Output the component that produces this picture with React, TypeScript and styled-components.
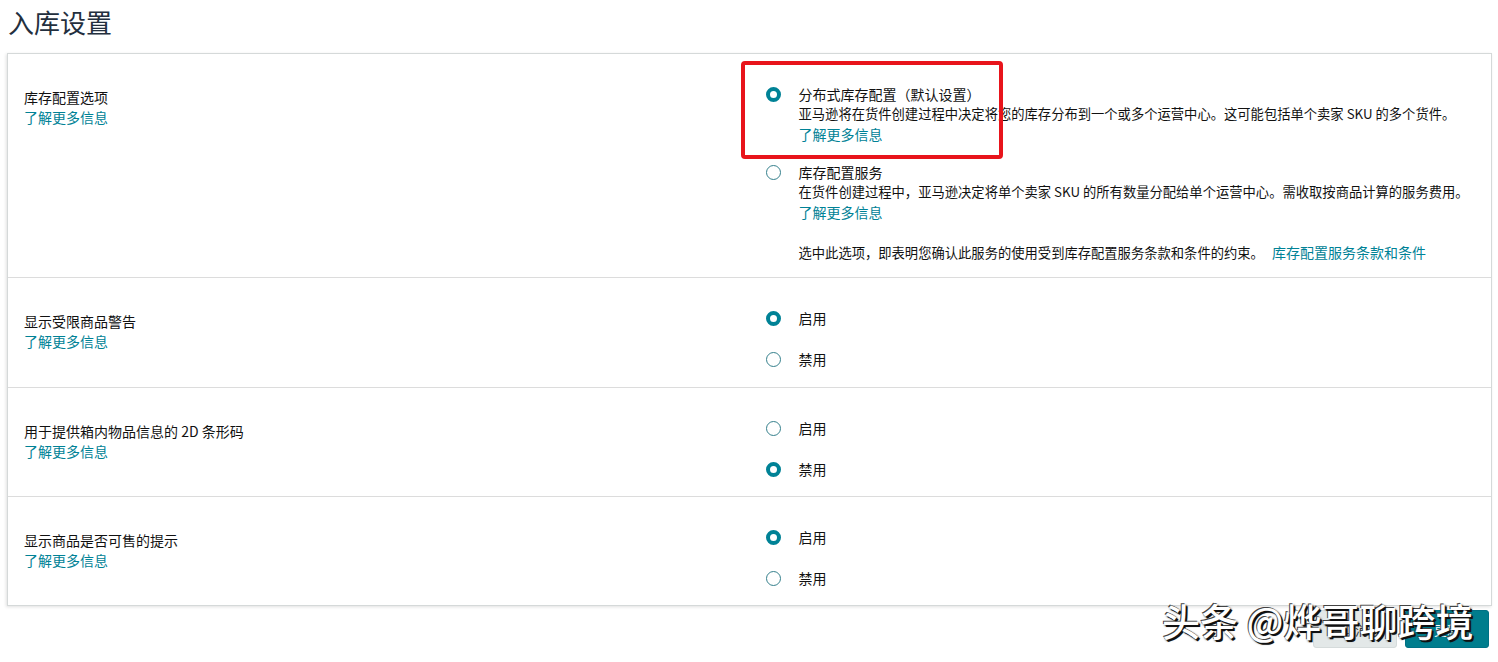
import React from 'react';
import styled, { createGlobalStyle } from 'styled-components';

const GlobalStyle = createGlobalStyle`
  body {
    margin: 0;
    background: #ffffff;
    font-family: "Noto Sans CJK SC", "Noto Sans", Arial, sans-serif;
    color: #111111;
  }
`;

const Page = styled.div`
  position: relative;
  padding: 0 6px 0 7px;
  height: 662px;
  overflow: hidden;
`;

const Heading = styled.h1`
  margin: 0;
  padding: 4px 0 0 1px;
  height: 53px;
  box-sizing: border-box;
  font-size: 26px;
  font-weight: 400;
  line-height: 36px;
  color: #232f3e;
`;

const Card = styled.div`
  border: 1px solid #d5d9d9;
  box-shadow: -1px 1px 3px rgba(0, 0, 0, 0.12);
  background: #fff;
`;

const Row = styled.div`
  display: grid;
  grid-template-columns: 1fr 1fr;
  column-gap: 32px;
  padding: 30px 16px 0 16px;
  height: ${(p) => p.$height}px;
  box-sizing: border-box;
  & + & {
    border-top: 1px solid #dcdcdc;
  }
`;

const LabelCol = styled.div`
  padding-top: 3px;
  font-size: 14px;
  line-height: 20px;
`;

const Link = styled.a`
  display: block;
  color: #008296;
  text-decoration: none;
  font-size: 14px;
  line-height: 20px;
  cursor: pointer;
`;

const InlineLink = styled(Link)`
  display: inline;
  margin-left: 8px;
`;

const Options = styled.div`
  position: relative;
  display: flex;
  flex-direction: column;
  gap: ${(p) => p.$gap}px;
`;

const Option = styled.label`
  display: flex;
  align-items: flex-start;
  gap: 18px;
  font-size: 14px;
  line-height: 20px;
`;

const Radio = styled.span`
  flex: none;
  width: 15px;
  height: 15px;
  margin-top: 3px;
  box-sizing: border-box;
  border-radius: 50%;
  border: ${(p) => (p.$checked ? '4px solid #008296' : '1px solid #35808c')};
  background: #fff;
`;

const OptionBody = styled.div`
  display: flex;
  flex-direction: column;
`;

const Title = styled.div`
  color: #111;
`;

const Desc = styled.div`
  font-size: 13.3px;
  line-height: 20px;
  color: #111;
  white-space: nowrap;
`;

const Terms = styled.div`
  margin-top: 20px;
  font-size: 13.3px;
  line-height: 20px;
  white-space: nowrap;
`;

/* red annotation frame drawn over the first option */
const Highlight = styled.div`
  position: absolute;
  left: -25px;
  top: -23px;
  width: 262px;
  height: 98px;
  box-sizing: border-box;
  border: 4px solid #e8141b;
  border-radius: 4px;
  pointer-events: none;
`;

const Footer = styled.div`
  display: flex;
  justify-content: flex-end;
  gap: 8px;
  padding: 4px 3px 0 0;
`;

const Button = styled.button`
  width: 84px;
  height: 38px;
  border-radius: 3px;
  border: 1px solid ${(p) => (p.$primary ? '#007185' : '#d5dbdb')};
  background: ${(p) => (p.$primary ? '#007d8d' : '#e3e8e8')};
  color: ${(p) => (p.$primary ? '#fff' : '#333')};
  font-family: inherit;
  font-size: 13px;
`;

const Watermark = styled.div`
  position: absolute;
  left: 1162px;
  top: 595px;
  font-size: 38px;
  font-weight: 500;
  line-height: 50px;
  color: #ffffff;
  text-shadow: 2px 2px 0 #111, -1px -1px 0 #444, 1px 1px 2px #000;
  white-space: nowrap;
  pointer-events: none;
`;

const MORE = '了解更多信息';

interface IToggleRowProps {
  label: string;
  enabled: boolean;
  height: number;
}

const ToggleRow: React.FC<IToggleRowProps> = ({ label, enabled, height }) => (
  <Row $height={height}>
    <LabelCol>
      {label}
      <Link>{MORE}</Link>
    </LabelCol>
    <Options $gap={21}>
      <Option>
        <Radio $checked={enabled} />
        <Title>启用</Title>
      </Option>
      <Option>
        <Radio $checked={!enabled} />
        <Title>禁用</Title>
      </Option>
    </Options>
  </Row>
);

const App: React.FC = () => (
  <Page>
    <GlobalStyle />
    <Heading>入库设置</Heading>
    <Card>
      <Row $height={223}>
        <LabelCol>
          库存配置选项
          <Link>{MORE}</Link>
        </LabelCol>
        <Options $gap={18}>
          <Highlight />
          <Option>
            <Radio $checked />
            <OptionBody>
              <Title>分布式库存配置（默认设置）</Title>
              <Desc>亚马逊将在货件创建过程中决定将您的库存分布到一个或多个运营中心。这可能包括单个卖家 SKU 的多个货件。</Desc>
              <Link>{MORE}</Link>
            </OptionBody>
          </Option>
          <Option>
            <Radio $checked={false} />
            <OptionBody>
              <Title>库存配置服务</Title>
              <Desc>在货件创建过程中，亚马逊决定将单个卖家 SKU 的所有数量分配给单个运营中心。需收取按商品计算的服务费用。</Desc>
              <Link>{MORE}</Link>
              <Terms>
                选中此选项，即表明您确认此服务的使用受到库存配置服务条款和条件的约束。
                <InlineLink>库存配置服务条款和条件</InlineLink>
              </Terms>
            </OptionBody>
          </Option>
        </Options>
      </Row>
      <ToggleRow label="显示受限商品警告" enabled height={110} />
      <ToggleRow label="用于提供箱内物品信息的 2D 条形码" enabled={false} height={109} />
      <ToggleRow label="显示商品是否可售的提示" enabled height={109} />
    </Card>
    <Footer>
      <Button>取消</Button>
      <Button $primary>更新</Button>
    </Footer>
    <Watermark>头条 @烨哥聊跨境</Watermark>
  </Page>
);

export default App;
